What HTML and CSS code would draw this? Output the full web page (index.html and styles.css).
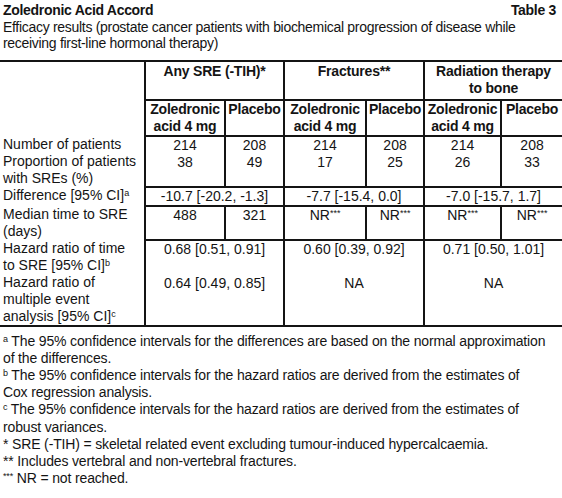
FILE: index.html
```html
<!DOCTYPE html>
<html lang="en">
<head>
  <meta charset="UTF-8">
  <title>Zoledronic Acid Accord - Table 3</title>
  <link rel="stylesheet" href="styles.css">
</head>
<body>
  <div class="title">
    <span>Zoledronic Acid Accord</span>
    <span>Table 3</span>
  </div>
  <p class="caption">Efficacy results (prostate cancer patients with biochemical progression of disease while<br>receiving first-line hormonal therapy)</p>

  <table class="efficacy">
    <colgroup>
      <col class="c-label">
      <col class="c-zol1">
      <col class="c-pla1">
      <col class="c-zol2">
      <col class="c-pla2">
      <col class="c-zol3">
      <col class="c-pla3">
    </colgroup>
    <thead>
      <tr class="groups">
        <th class="label" rowspan="2"></th>
        <th colspan="2">Any SRE (-TIH)*</th>
        <th colspan="2">Fractures**</th>
        <th colspan="2">Radiation therapy<br>to bone</th>
      </tr>
      <tr class="arms">
        <th>Zoledronic<br>acid 4 mg</th>
        <th>Placebo</th>
        <th>Zoledronic<br>acid 4 mg</th>
        <th>Placebo</th>
        <th>Zoledronic<br>acid 4 mg</th>
        <th>Placebo</th>
      </tr>
    </thead>
    <tbody>
      <tr>
        <td class="label">Number of patients<br>Proportion of patients<br>with SREs (%)</td>
        <td>214<br>38</td>
        <td>208<br>49</td>
        <td>214<br>17</td>
        <td>208<br>25</td>
        <td>214<br>26</td>
        <td>208<br>33</td>
      </tr>
      <tr>
        <td class="label">Difference [95% CI]<sup>a</sup></td>
        <td colspan="2">-10.7 [-20.2, -1.3]</td>
        <td colspan="2">-7.7 [-15.4, 0.0]</td>
        <td colspan="2">-7.0 [-15.7, 1.7]</td>
      </tr>
      <tr>
        <td class="label">Median time to SRE<br>(days)</td>
        <td>488</td>
        <td>321</td>
        <td>NR<sup>***</sup></td>
        <td>NR<sup>***</sup></td>
        <td>NR<sup>***</sup></td>
        <td>NR<sup>***</sup></td>
      </tr>
      <tr>
        <td class="label">Hazard ratio of time<br>to SRE [95% CI]<sup>b</sup><br>Hazard ratio of<br>multiple event<br>analysis [95% CI]<sup>c</sup></td>
        <td colspan="2">0.68 [0.51, 0.91]<br><br>0.64 [0.49, 0.85]</td>
        <td colspan="2">0.60 [0.39, 0.92]<br><br>NA</td>
        <td colspan="2">0.71 [0.50, 1.01]<br><br>NA</td>
      </tr>
    </tbody>
  </table>

  <div class="notes">
    <p><sup>a</sup> The 95% confidence intervals for the differences are based on the normal approximation<br>of the differences.</p>
    <p><sup>b</sup> The 95% confidence intervals for the hazard ratios are derived from the estimates of<br>Cox regression analysis.</p>
    <p><sup>c</sup> The 95% confidence intervals for the hazard ratios are derived from the estimates of<br>robust variances.</p>
    <p>* SRE (-TIH) = skeletal related event excluding tumour-induced hypercalcaemia.</p>
    <p>** Includes vertebral and non-vertebral fractures.</p>
    <p><sup>***</sup> NR = not reached.</p>
  </div>
</body>
</html>
```

FILE: styles.css
```css
body {
  margin: 0;
  background: #fff;
  color: #141414;
  font-family: "Liberation Sans", Arial, sans-serif;
  font-size: 14px;
  line-height: 16.5px;
}

.title {
  display: flex;
  justify-content: space-between;
  padding: 2px 6px 0 3px;
  font-weight: bold;
  letter-spacing: -0.3px;
}

.caption {
  margin: 0;
  padding: 0 3px;
  white-space: nowrap;
  letter-spacing: -0.3px;
}

.efficacy {
  width: 100%;
  margin-top: 8px;
  border-collapse: collapse;
  table-layout: fixed;
  line-height: 17px;
  border-top: 2px solid #141414;
  border-bottom: 2px solid #141414;
}

.c-label { width: 145px; }
.c-zol1 { width: 80px; }
.c-pla1 { width: 59px; }
.c-zol2 { width: 82px; }
.c-pla2 { width: 58px; }
.c-zol3 { width: 77px; }
.c-pla3 { width: 61px; }

.efficacy th,
.efficacy td {
  padding: 0;
  vertical-align: top;
  text-align: center;
  white-space: nowrap;
  border: 2px solid #141414;
  border-right: none;
}

.efficacy th {
  font-weight: bold;
  letter-spacing: -0.2px;
}

.efficacy .groups th {
  height: 36px;
  padding-top: 1px;
}

.efficacy .label {
  text-align: left;
  border-left: none;
  border-top: none;
  border-bottom: none;
  padding-left: 3px;
}

sup {
  font-size: 9px;
  line-height: 8px;
  vertical-align: 4px;
}

.notes {
  padding: 6px 3px 0;
  line-height: 17.2px;
  white-space: nowrap;
  letter-spacing: -0.15px;
}

.notes p {
  margin: 0;
}
```
